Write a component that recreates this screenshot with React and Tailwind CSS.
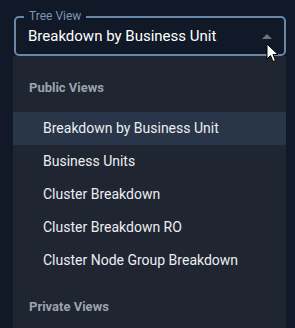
export default function App() {
  const items = [
    'Breakdown by Business Unit',
    'Business Units',
    'Cluster Breakdown',
    'Cluster Breakdown RO',
    'Cluster Node Group Breakdown',
  ];

  return (
    <div className="w-[295px] h-[328px] overflow-hidden bg-[#111827] relative font-['Roboto',sans-serif]">
      <div className="pt-[16px] pl-[14px] pr-[9px]">
        <div className="relative h-[40px] border-2 border-[#6b87a8] rounded-[5px] flex items-center pl-[12px] pr-[12px]">
          <span className="absolute -top-[10px] left-[8px] px-[5px] bg-[#111827] text-[12px] leading-[16px] text-[#7d95b5]">
            Tree View
          </span>
          <span className="text-[15px] text-white flex-1">Breakdown by Business Unit</span>
          <svg width="10" height="5" viewBox="0 0 10 5">
            <path d="M0 5 L5 0 L10 5 Z" fill="#6b7280" />
          </svg>
        </div>
      </div>
      <div className="ml-[13px] w-[273px] h-[400px] bg-[#1f2531] pt-[16px]">
        <div className="h-[32px] flex items-center pl-[16px] text-[13px] font-bold text-[#9ca3af]">
          Public Views
        </div>
        <div className="mt-[8px]">
          {items.map((t, i) => (
            <div
              key={t}
              className={
                'h-[33px] flex items-center pl-[30px] text-[14px] text-[#eceef1] ' +
                (i === 0 ? 'bg-[#293548]' : '')
              }
            >
              {t}
            </div>
          ))}
        </div>
        <div className="mt-[14px] h-[32px] flex items-center pl-[16px] text-[13px] font-bold text-[#9ca3af]">
          Private Views
        </div>
      </div>
      <svg
        className="absolute left-[266px] top-[43px]"
        width="14"
        height="21"
        viewBox="0 0 14 21"
      >
        <path
          d="M1 1 L1 16 L4.5 12.5 L7 18.5 L9.5 17.5 L7 11.5 L12 11.5 Z"
          fill="#ffffff"
          stroke="#000000"
          strokeWidth="1"
          strokeLinejoin="round"
        />
      </svg>
    </div>
  );
}
